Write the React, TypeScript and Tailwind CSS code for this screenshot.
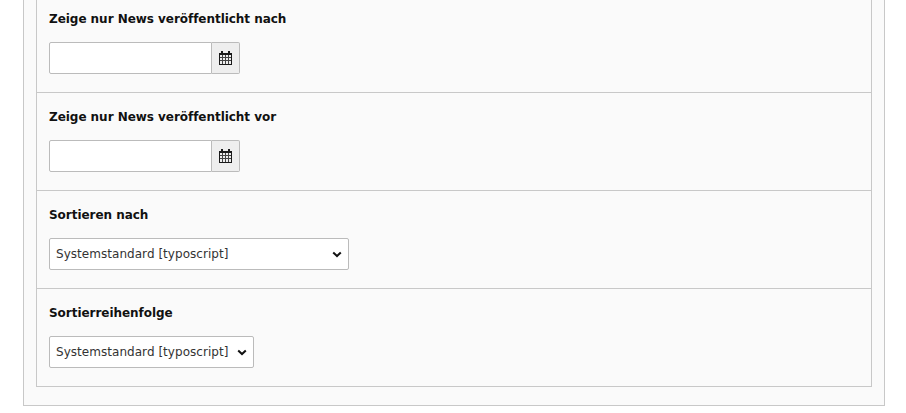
const font = { fontFamily: '"DejaVu Sans", Verdana, sans-serif' };

function Calendar() {
  return (
    <svg width="13" height="14" viewBox="0 0 13 14" shapeRendering="crispEdges">
      <path d="M0.5 2.5H12.5V13.5H0.5Z" fill="none" stroke="#1a1a1a" />
      <path d="M0 2H13V4H0Z" fill="#1a1a1a" />
      <path d="M2 0H4V3H2ZM9 0H11V3H9Z" fill="#1a1a1a" />
      <path d="M3.5 4V13M6.5 4V13M9.5 4V13M1 6.5H12M1 9.5H12" stroke="#444" strokeWidth="1" fill="none" />
    </svg>
  );
}

function Chevron() {
  return (
    <svg width="10" height="7" viewBox="0 0 10 7" className="pointer-events-none absolute right-[7.5px] top-[13px]">
      <path d="M1.2 1.4L5 5L8.8 1.4" fill="none" stroke="#111" strokeWidth="2" />
    </svg>
  );
}

function Label({ children }: { children: string }) {
  return <label className="block h-[18px] text-[12px] leading-[18px] font-bold tracking-[-0.04px] text-[#111]">{children}</label>;
}

function DateField({ label, first }: { label: string; first?: boolean }) {
  return (
    <div className={`border-b border-[#c8c8c8] px-3 ${first ? "pt-[10px] pb-[18px]" : "pt-[15px] pb-[18px]"}`}>
      <Label>{label}</Label>
      <div className="mt-[14px] flex h-8 w-[191px]">
        <input className="h-8 w-[163px] rounded-l-[2px] border border-[#bbbbbb] bg-white" />
        <span className="flex h-8 w-[28px] items-center justify-center rounded-r-[2px] border border-l-0 border-[#bbbbbb] bg-[#eeeeee]">
          <Calendar />
        </span>
      </div>
    </div>
  );
}

function SelectField({ label, width, last }: { label: string; width: string; last?: boolean }) {
  return (
    <div className={`${last ? "" : "border-b border-[#c8c8c8]"} px-3 pt-[15px] pb-[18px]`}>
      <Label>{label}</Label>
      <div className={`relative mt-[14px] h-8 ${width}`}>
        <select className="h-8 w-full appearance-none rounded-[2px] border border-[#bbbbbb] bg-white pl-[6px] text-[12px] tracking-[0.04px] text-[#333]">
          <option>Systemstandard [typoscript]</option>
        </select>
        <Chevron />
      </div>
    </div>
  );
}

export default function App() {
  return (
    <div className="h-[413px] w-[906px] overflow-hidden bg-white" style={font}>
      <div className="ml-[23px] w-[862px] border-x border-b border-[#c8c8c8] bg-[#fafafa] px-3 pb-[18px]">
        <div className="border-x border-b border-[#c8c8c8] bg-[#fafafa]">
          <DateField label="Zeige nur News veröffentlicht nach" first />
          <DateField label="Zeige nur News veröffentlicht vor" />
          <SelectField label="Sortieren nach" width="w-[300px]" />
          <SelectField label="Sortierreihenfolge" width="w-[205px]" last />
        </div>
      </div>
    </div>
  );
}
